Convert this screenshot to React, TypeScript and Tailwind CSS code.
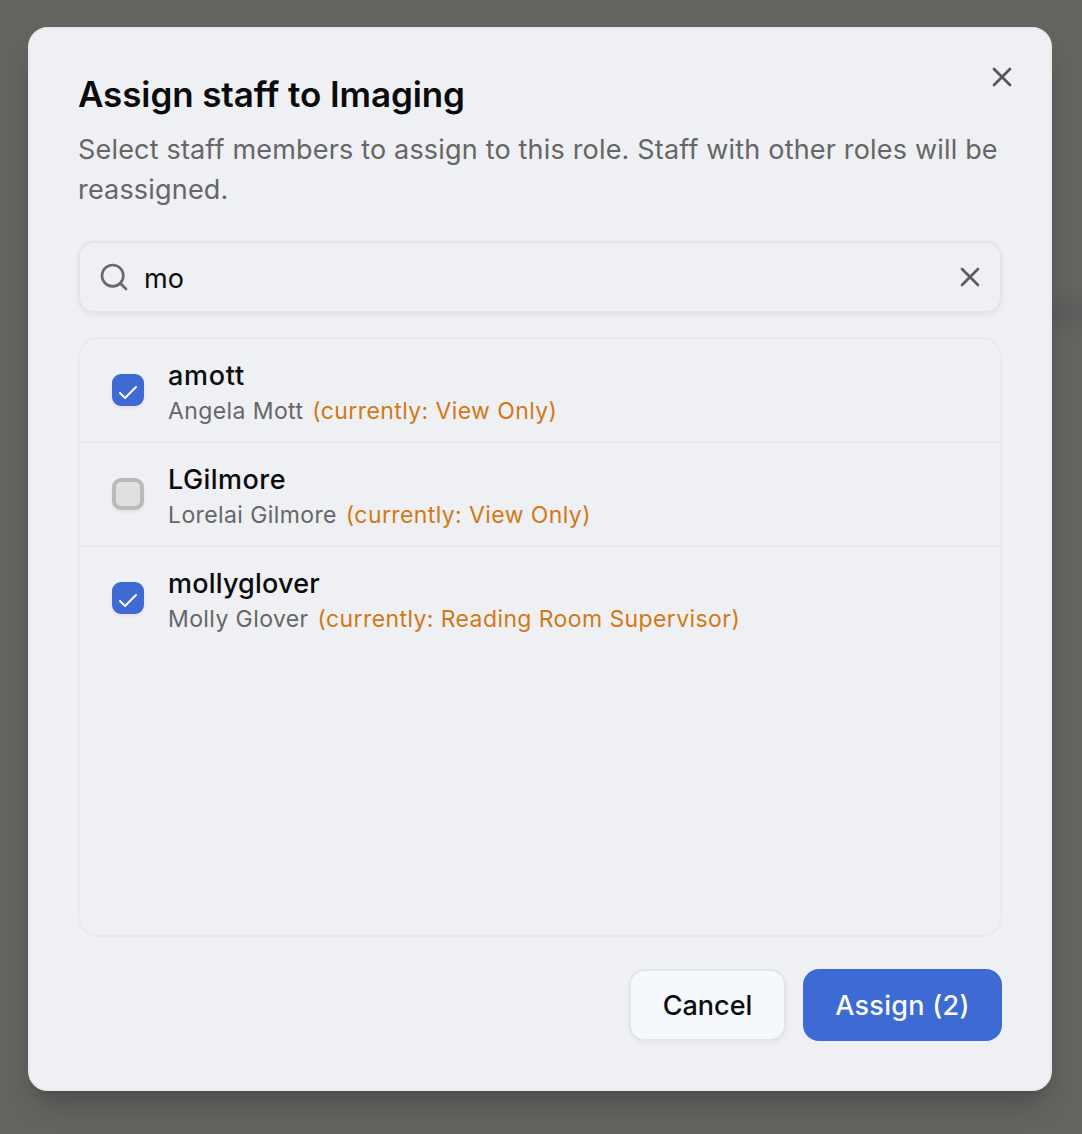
import React, { useState } from 'react';
import { Check, Search, X } from 'lucide-react';

const staff = [
  { username: 'amott', name: 'Angela Mott', role: 'View Only', tracking: 'tracking-[0.75px]' },
  { username: 'LGilmore', name: 'Lorelai Gilmore', role: 'View Only', tracking: 'tracking-[0.45px]' },
  { username: 'mollyglover', name: 'Molly Glover', role: 'Reading Room Supervisor', tracking: 'tracking-[0.2px]' },
];

export default function App() {
  const [query, setQuery] = useState('mo');
  const [selected, setSelected] = useState<string[]>(['amott', 'mollyglover']);

  const toggle = (username: string) => {
    setSelected((prev) => (prev.includes(username) ? prev.filter((u) => u !== username) : [...prev, username]));
  };

  const visible = staff.filter((s) => `${s.username} ${s.name}`.toLowerCase().includes(query.toLowerCase()));

  return (
    <div className="relative h-[1134px] w-[1082px] overflow-hidden bg-[#666461] pt-[27px] pl-7 font-['Inter',sans-serif]">
      {/* Dimmed page content showing beside the dialog */}
      <div className="absolute top-[285px] right-0 h-14 w-10 bg-linear-to-b from-transparent via-[#5e5d5c] to-transparent" />

      <div className="relative flex h-[1064px] w-[1024px] flex-col rounded-[20px] border-2 border-[#e9ebee] bg-[#eef0f4] px-12 pt-[47px] shadow-[0_20px_30px_-6px_rgba(0,0,0,0.2),0_8px_12px_-8px_rgba(0,0,0,0.2)]">
        <button aria-label="Close" className="absolute top-8 right-8 text-[#55565a]">
          <X className="h-8 w-8" />
        </button>

        {/* Header */}
        <h2 className="text-[35px] leading-9 font-semibold tracking-[-0.1px] text-[#0b0b0d]">Assign staff to Imaging</h2>
        <p className="mt-[18px] text-[27px] leading-10 tracking-[0.18px] text-[#666666]">
          Select staff members to assign to this role. Staff with other roles will be reassigned.
        </p>

        {/* Search */}
        <div className="mt-[31px] flex h-[72px] shrink-0 items-center rounded-2xl border-2 border-[#e4e5e5] pr-[14px] pl-[18px] shadow-[0_2px_4px_rgba(0,0,0,0.06)]">
          <Search className="h-8 w-8 shrink-0 text-[#68696a]" />
          <input
            value={query}
            onChange={(e) => setQuery(e.target.value)}
            className="ml-[14px] min-w-0 flex-1 bg-transparent pt-[5px] text-[27px] text-[#0b0b0d] outline-none"
          />
          <button aria-label="Clear search" onClick={() => setQuery('')} className="text-[#5c5d5f]">
            <X className="h-8 w-8" />
          </button>
        </div>

        {/* Staff list */}
        <div className="mt-6 h-[600px] shrink-0 overflow-hidden rounded-[20px] border-2 border-[#e7e9eb]">
          {visible.map((s) => {
            const checked = selected.includes(s.username);
            return (
              <div key={s.username} className="flex h-[104px] items-start gap-6 border-b-2 border-[#e5e7e9] px-8 last:border-b-0">
                <button
                  role="checkbox"
                  aria-checked={checked}
                  onClick={() => toggle(s.username)}
                  className={`mt-[35px] flex h-8 w-8 shrink-0 items-center justify-center rounded-[9px] shadow-[0_2px_4px_rgba(0,0,0,0.06)] ${checked ? 'bg-[#3d6ad3]' : 'border-4 border-[#bababa] bg-[#dfe0e1]'}`}
                >
                  {checked && <Check className="mt-[5px] h-6 w-6 text-white" />}
                </button>
                <div className="pt-[19px]">
                  <p className={`text-[27px] leading-9 font-medium text-[#0b0b0d] ${s.tracking}`}>{s.username}</p>
                  <p className="mt-px text-[23px] leading-8 tracking-[0.4px] text-[#666666]">
                    {s.name} <span className="ml-0.5 text-[#d27914]">(currently: {s.role})</span>
                  </p>
                </div>
              </div>
            );
          })}
        </div>

        {/* Actions */}
        <div className="mt-8 flex justify-end gap-[17px]">
          <button className="h-[72px] w-[157px] rounded-2xl border-2 border-[#e4e5e5] bg-[#f6f9fb] pt-0.5 text-[27px] font-medium text-[#0b0b0d] shadow-[0_2px_4px_rgba(0,0,0,0.05)]">Cancel</button>
          <button className="h-[72px] w-[199px] rounded-2xl bg-[#3d6ad3] pt-0.5 text-[27px] font-medium tracking-[0.3px] text-[#f8fafc]">Assign ({selected.length})</button>
        </div>
      </div>
    </div>
  );
}
